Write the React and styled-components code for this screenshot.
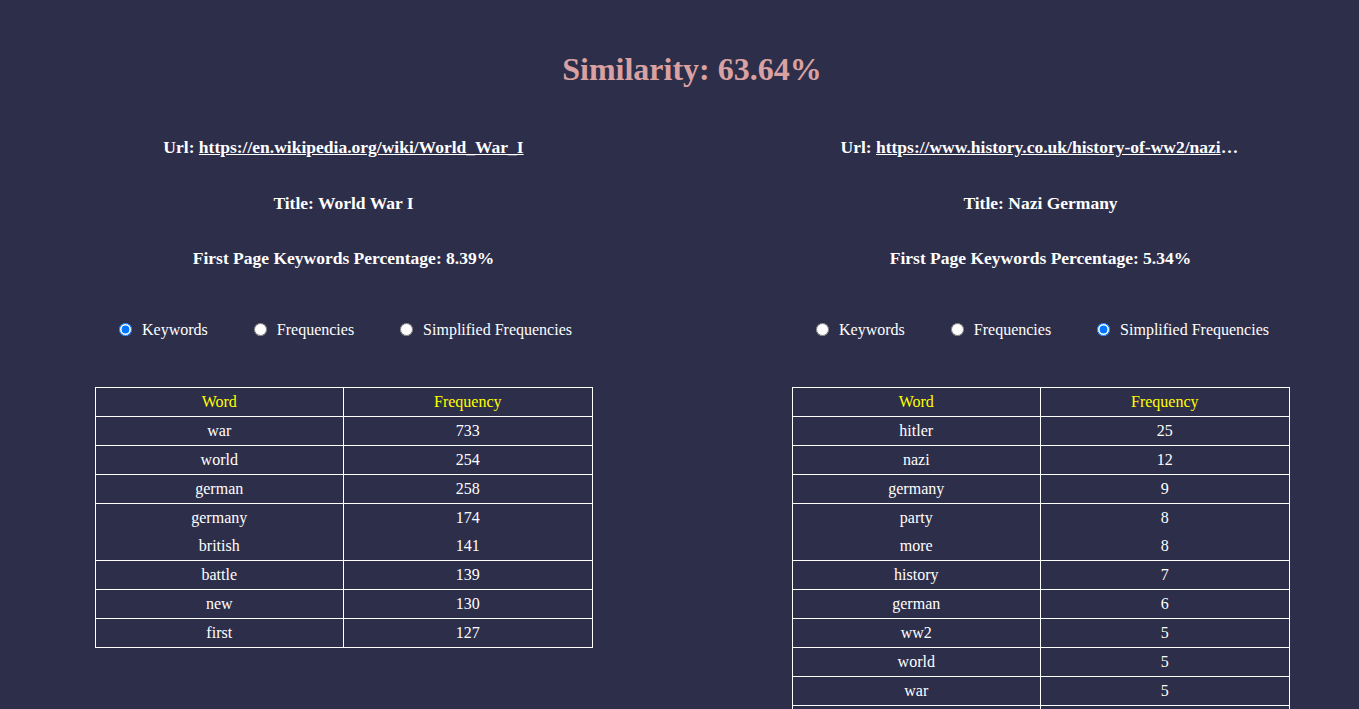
import styled, { createGlobalStyle } from "styled-components";

const GlobalStyle = createGlobalStyle`
  html, body {
    margin: 0;
    padding: 0;
    background: #2d2e4a;
  }
  body {
    font-family: "Liberation Serif", "Times New Roman", serif;
    color: #ffffff;
  }
`;

const Page = styled.main`
  min-height: 100vh;
  padding: 51px 0 0 25px;
`;

const Heading = styled.h1`
  margin: 0;
  text-align: center;
  font-size: 32px;
  line-height: 36px;
  font-weight: bold;
  color: #d9a1a1;
`;

const Columns = styled.div`
  display: grid;
  grid-template-columns: 1fr 1fr;
  column-gap: 60px;
  margin-top: 50px;
`;

const Column = styled.section`
  display: flex;
  flex-direction: column;
  align-items: center;
`;

const InfoList = styled.div`
  display: flex;
  flex-direction: column;
  align-items: center;
  gap: 34.5px;
`;

const InfoLine = styled.p`
  margin: 0;
  max-width: 400px;
  font-size: 17.5px;
  line-height: 21px;
  font-weight: bold;
  white-space: nowrap;
  overflow: hidden;
  text-overflow: ellipsis;

  a {
    color: #ffffff;
    text-decoration: underline;
  }
`;

const RadioGroup = styled.div`
  display: flex;
  gap: 46px;
  margin-top: 51px;
  padding-left: 4px;
  font-size: 16px;
  line-height: 20px;
`;

const RadioLabel = styled.label`
  display: flex;
  align-items: center;
  cursor: pointer;

  input {
    width: 13px;
    height: 13px;
    margin: 0 10px 2px 0;
  }
`;

const Table = styled.table`
  margin-top: 47px;
  width: 498px;
  border-collapse: collapse;
  font-size: 16px;
  text-align: center;
`;

const Th = styled.th`
  height: 28px;
  padding: 0;
  border: 1px solid #ffffff;
  font-weight: normal;
  color: #ffff00;
  width: 50%;
`;

const Td = styled.td`
  padding: 0;
  border: 1px solid #ffffff;
  line-height: 28px;
`;

const Line = styled.div`
  height: 28px;
  line-height: 28px;
`;

const modes = ["Keywords", "Frequencies", "Simplified Frequencies"];

const sites = [
  {
    url: "https://en.wikipedia.org/wiki/World_War_I",
    title: "World War I",
    percent: "8.39%",
    mode: "Keywords",
    rows: [
      [["war"], ["733"]],
      [["world"], ["254"]],
      [["german"], ["258"]],
      [["germany", "british"], ["174", "141"]],
      [["battle"], ["139"]],
      [["new"], ["130"]],
      [["first"], ["127"]],
    ],
  },
  {
    url: "https://www.history.co.uk/history-of-ww2/nazi-germany",
    title: "Nazi Germany",
    percent: "5.34%",
    mode: "Simplified Frequencies",
    rows: [
      [["hitler"], ["25"]],
      [["nazi"], ["12"]],
      [["germany"], ["9"]],
      [["party", "more"], ["8", "8"]],
      [["history"], ["7"]],
      [["german"], ["6"]],
      [["ww2"], ["5"]],
      [["world"], ["5"]],
      [["war"], ["5"]],
      [["people"], ["4"]],
    ],
  },
];

function SiteColumn({ site, index }) {
  return (
    <Column>
      <InfoList>
        <InfoLine>
          Url: <a href={site.url}>{site.url}</a>
        </InfoLine>
        <InfoLine>Title: {site.title}</InfoLine>
        <InfoLine>First Page Keywords Percentage: {site.percent}</InfoLine>
      </InfoList>
      <RadioGroup>
        {modes.map((m) => (
          <RadioLabel key={m}>
            <input
              type="radio"
              name={`mode-${index}`}
              defaultChecked={m === site.mode}
            />
            {m}
          </RadioLabel>
        ))}
      </RadioGroup>
      <Table>
        <thead>
          <tr>
            <Th>Word</Th>
            <Th>Frequency</Th>
          </tr>
        </thead>
        <tbody>
          {site.rows.map(([words, counts], i) => (
            <tr key={i}>
              <Td>
                {words.map((w) => (
                  <Line key={w}>{w}</Line>
                ))}
              </Td>
              <Td>
                {counts.map((c, j) => (
                  <Line key={j}>{c}</Line>
                ))}
              </Td>
            </tr>
          ))}
        </tbody>
      </Table>
    </Column>
  );
}

export default function App() {
  return (
    <>
      <GlobalStyle />
      <Page>
        <Heading>Similarity: 63.64%</Heading>
        <Columns>
          {sites.map((site, i) => (
            <SiteColumn key={site.title} site={site} index={i} />
          ))}
        </Columns>
      </Page>
    </>
  );
}
